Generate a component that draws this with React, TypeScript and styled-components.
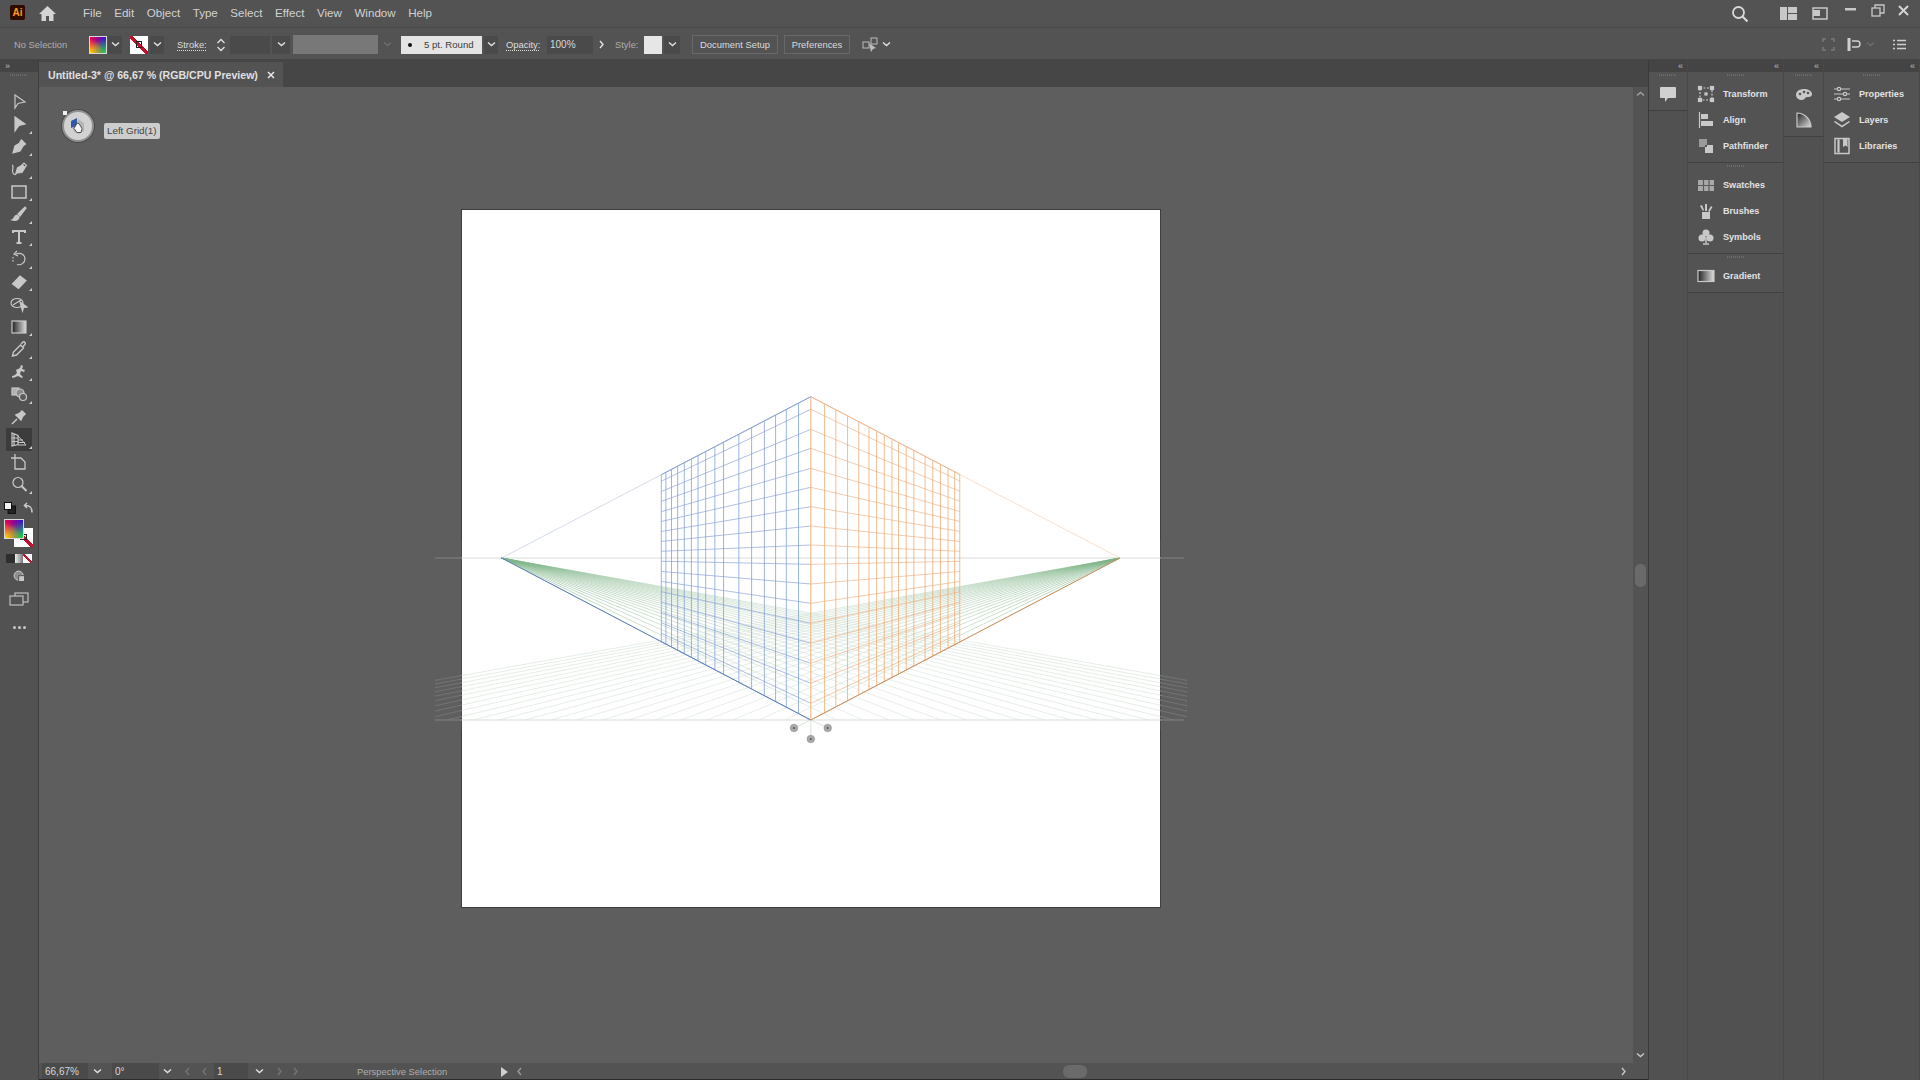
import { ReactNode } from "react";
import styled, { createGlobalStyle } from "styled-components";

const GlobalStyle = createGlobalStyle`
  html, body { margin: 0; padding: 0; background: #535353; }
  * { box-sizing: border-box; }
`;

const FONT = `"Liberation Sans", Arial, sans-serif`;

/* page */
const Page = styled.div`
  width: 1920px;
  height: 1080px;
  overflow: hidden;
  display: flex;
  flex-direction: column;
  background: #535353;
  font-family: ${FONT};
  color: #d6d6d6;
`;

const MenuBar = styled.div`
  height: 28px;
  flex: none;
  display: flex;
  align-items: center;
  border-bottom: 1px solid #484848;
  background: #535353;
`;

const AiLogo = styled.div`
  width: 15px;
  height: 15px;
  margin: 0 0 2px 10px;
  border-radius: 2px;
  background: #2e0a00;
  color: #ff9a1a;
  font-size: 10px;
  font-weight: 700;
  line-height: 15px;
  text-align: center;
`;

const MenuList = styled.div`
  display: flex;
  gap: 12.5px;
  margin: 0 0 2px 26px;
  font-size: 11.6px;
  color: #d2d2d2;
`;

const MenuRight = styled.div`
  margin-left: auto;
  display: flex;
  align-items: center;
`;

const WindowButtons = styled.div`
  display: flex;
  align-items: center;
  margin-bottom: 7px;
`;

const Slot = styled.div<{ $w: number; $ml?: number; $dark?: boolean }>`
  width: ${(p) => p.$w}px;
  margin-left: ${(p) => p.$ml ?? 0}px;
  height: 18px;
  flex: none;
  display: flex;
  align-items: center;
  justify-content: center;
  background: ${(p) => (p.$dark ? "#4a4a4a" : "transparent")};
`;

const ControlBar = styled.div`
  height: 32px;
  flex: none;
  display: flex;
  align-items: center;
  padding: 2px 0 0 14px;
  font-size: 9.4px;
  border-bottom: 1px solid #454545;
`;

const Caption = styled.span<{ $w: number; $ml?: number; $link?: boolean; $dim?: boolean }>`
  width: ${(p) => p.$w}px;
  margin-left: ${(p) => p.$ml ?? 0}px;
  flex: none;
  white-space: nowrap;
  color: ${(p) => (p.$dim ? "#aeaeae" : "#dedede")};
  font-size: 9.4px;
  text-decoration: ${(p) => (p.$link ? "underline dotted" : "none")};
  text-underline-offset: 2px;
`;

const FillSwatch = styled.div<{ $w?: number }>`
  width: ${(p) => p.$w ?? 18}px;
  height: ${(p) => p.$w ?? 18}px;
  flex: none;
  border: 1px solid #d8d8d8;
  background: radial-gradient(circle at 0% 100%, #ffe000 0, transparent 62%),
    radial-gradient(circle at 100% 100%, #20e040 0, transparent 68%),
    linear-gradient(to right, #f0004a, #2a10e0);
`;

const NoneSwatch = styled.div<{ $w?: number; $ml?: number }>`
  position: relative;
  width: ${(p) => p.$w ?? 18}px;
  height: ${(p) => p.$w ?? 18}px;
  margin-left: ${(p) => p.$ml ?? 0}px;
  flex: none;
  background: linear-gradient(to top right, #fff 43%, #c4122e 43%, #c4122e 57%, #fff 57%);

  &::after {
    content: "";
    position: absolute;
    inset: 33%;
    border: 1px solid #222;
  }
`;

const GreyField = styled.div`
  width: 85px;
  height: 19px;
  margin-left: 3px;
  flex: none;
  background: #787878;
`;

const BrushField = styled.div`
  width: 81px;
  height: 18px;
  margin-left: 5px;
  flex: none;
  display: flex;
  align-items: center;
  padding-left: 7px;
  gap: 12px;
  background: #e4e4e4;
  color: #3c3c3c;
  font-size: 9.6px;
  white-space: nowrap;

  &::before {
    content: "";
    width: 4px;
    height: 4px;
    border-radius: 50%;
    background: #111;
  }
`;

const ValueField = styled.div<{ $w: number; $ml?: number }>`
  width: ${(p) => p.$w}px;
  margin-left: ${(p) => p.$ml ?? 0}px;
  height: 18px;
  flex: none;
  padding-left: 3px;
  line-height: 18px;
  background: #4a4a4a;
  color: #d8d8d8;
  font-size: 10px;
`;

const StyleSwatch = styled.div`
  width: 18px;
  height: 18px;
  margin-left: 5px;
  flex: none;
  background: #e6e6e6;
`;

const BarButton = styled.div<{ $w: number; $ml: number }>`
  width: ${(p) => p.$w}px;
  height: 19px;
  margin-left: ${(p) => p.$ml}px;
  flex: none;
  border: 1px solid #686868;
  line-height: 17px;
  text-align: center;
  font-size: 9.4px;
  color: #dcdcdc;
`;

const BarRight = styled.div`
  margin-left: auto;
  display: flex;
  align-items: center;
`;

/* main work area */
const Main = styled.div`
  flex: 1;
  min-height: 0;
  display: flex;
`;

const ToolPanel = styled.div`
  width: 39px;
  flex: none;
  display: flex;
  flex-direction: column;
  align-items: center;
  border-right: 1px solid #3f3f3f;
  background: #525252;
`;

const StripHead = styled.div<{ $align?: string }>`
  width: 100%;
  height: 12px;
  flex: none;
  display: flex;
  align-items: center;
  justify-content: ${(p) => p.$align ?? "flex-end"};
  padding: 0 5px;
  background: #444;
  color: #bdbdbd;
  font-size: 9px;
  line-height: 12px;
  letter-spacing: -1px;
`;

const Grip = styled.div<{ $w?: number }>`
  width: ${(p) => p.$w ?? 18}px;
  height: 2px;
  margin: 2px auto 0;
  flex: none;
  background: repeating-linear-gradient(to right, #6a6a6a 0 1px, transparent 1px 2px);
`;

const ToolList = styled.div`
  display: flex;
  flex-direction: column;
  margin-top: 14.6px;
`;

const Tool = styled.div<{ $active?: boolean; $more?: boolean }>`
  position: relative;
  width: 26px;
  height: 22.5px;
  display: flex;
  align-items: center;
  justify-content: center;
  background: ${(p) => (p.$active ? "#3c3c3c" : "transparent")};

  &::after {
    content: "";
    display: ${(p) => (p.$more ? "block" : "none")};
    position: absolute;
    right: 0;
    bottom: 2px;
    border-style: solid;
    border-width: 0 0 3px 3px;
    border-color: transparent transparent #cfcfcf transparent;
  }
`;

const MiniRow = styled.div<{ $mt: number; $gap?: number }>`
  width: 30px;
  margin-top: ${(p) => p.$mt}px;
  flex: none;
  display: flex;
  align-items: center;
  justify-content: center;
  gap: ${(p) => p.$gap ?? 0}px;
`;

const SwatchStack = styled.div`
  position: relative;
  width: 30px;
  height: 30px;
  margin-top: 5px;
  flex: none;

  & > :first-child {
    position: absolute;
    left: 10px;
    top: 9px;
  }

  & > :last-child {
    position: absolute;
    left: 0;
    top: 0;
  }
`;

const ModeChip = styled.div<{ $bg: string }>`
  width: 8.5px;
  height: 9px;
  flex: none;
  background: ${(p) => p.$bg};
`;

const DocArea = styled.div`
  flex: 1;
  min-width: 0;
  display: flex;
  flex-direction: column;
`;

const TabBar = styled.div`
  height: 27px;
  flex: none;
  display: flex;
  align-items: flex-end;
  background: #464646;
`;

const Tab = styled.div`
  width: 244px;
  height: 25px;
  display: flex;
  align-items: center;
  justify-content: space-between;
  padding: 0 8px 0 9px;
  background: #535353;
  color: #e0e0e0;
  font-size: 10.6px;
  font-weight: 700;
  white-space: nowrap;
`;

const CanvasRow = styled.div`
  flex: 1;
  min-height: 0;
  display: flex;
`;

const Canvas = styled.div`
  position: relative;
  flex: 1;
  padding: 123px 0 0 423px;
  background: #5e5e5e;
`;

const Artboard = styled.div`
  position: relative;
  width: 698px;
  height: 697px;
  background: #fff;
  box-shadow: 0 0 0 1px #3e3e3e;
`;

const GridSvg = styled.svg`
  position: absolute;
  left: -27px;
  top: 180px;
  width: 760px;
  height: 360px;
  overflow: visible;
`;

const Widget = styled.div`
  position: absolute;
  left: 23px;
  top: 23px;
  width: 32px;
  height: 32px;
  display: flex;
  align-items: center;
  justify-content: center;
  border-radius: 50%;
  border: 2px solid #8f8f8f;
  background: #d2d2d2;
  box-shadow: 0 0 0 1px #4a4a4a;

  &::before {
    content: "";
    position: absolute;
    left: -1px;
    top: -1px;
    width: 4px;
    height: 4px;
    background: #f0f0f0;
  }
`;

const Tip = styled.div`
  position: absolute;
  left: 65px;
  top: 36px;
  height: 16px;
  padding: 0 3px;
  border-radius: 2px;
  background: #cdcdcd;
  color: #444;
  font-size: 9.8px;
  line-height: 16px;
  white-space: nowrap;
`;

const VScroll = styled.div`
  width: 15px;
  flex: none;
  display: flex;
  flex-direction: column;
  align-items: center;
  justify-content: space-between;
  padding: 3px 0;
  background: #535353;
`;

const ScrollThumb = styled.div`
  width: 11px;
  height: 23px;
  margin-top: 1px;
  border-radius: 5px;
  background: #6a6a6a;
`;

const StatusBar = styled.div`
  height: 15px;
  margin-top: 1px;
  flex: none;
  display: flex;
  align-items: center;
  padding-left: 3px;
  background: #535353;
  font-size: 10px;
`;

const StatusThumb = styled.div`
  width: 24px;
  height: 13px;
  margin-left: 538px;
  flex: none;
  border-radius: 6px;
  background: #6a6a6a;
`;

const BottomEdge = styled.div`
  height: 1px;
  flex: none;
  background: #2c2c2c;
`;

/* right dock */
const Dock = styled.div`
  width: 272px;
  flex: none;
  display: flex;
  border-left: 1px solid #3a3a3a;
`;

const DockColumn = styled.div<{ $w: number }>`
  width: ${(p) => p.$w}px;
  flex: none;
  display: flex;
  flex-direction: column;
  border-right: 1px solid #484848;
  background: #515151;
`;

const DockGroup = styled.div`
  display: flex;
  flex-direction: column;
  padding-bottom: 3px;
  border-bottom: 1px solid #414141;
  background: #535353;
`;

const DockItems = styled.div`
  display: flex;
  flex-direction: column;
  margin-top: 5px;
`;

const DockItem = styled.div<{ $center?: boolean }>`
  height: 26px;
  display: flex;
  align-items: center;
  justify-content: ${(p) => (p.$center ? "center" : "flex-start")};
  gap: 8px;
  padding-left: ${(p) => (p.$center ? 0 : "9px")};
  color: #e2e2e2;
  font-size: 9.1px;
  font-weight: 700;
`;

const Icon = ({ size = 18, children }: { size?: number; children: ReactNode }) => (
  <svg width={size} height={size} viewBox="0 0 18 18" fill="none" stroke="#c8c8c8" strokeWidth="1.2">
    {children}
  </svg>
);

const Chevron = ({ color = "#e2e2e2", dir = "down" }: { color?: string; dir?: "down" | "right" | "left" | "up" }) => {
  const d = { down: "M1 2.5l3.5 3 3.5-3", up: "M1 5.5l3.5-3 3.5 3", right: "M3 1l3 3.5-3 3.5", left: "M6 1L3 4.5l3 3.5" }[dir];
  return (
    <svg width="9" height="9" viewBox="0 0 9 9" fill="none" stroke={color} strokeWidth="1.4">
      <path d={d} />
    </svg>
  );
};

const tools: { key: string; more?: boolean; active?: boolean; icon: ReactNode }[] = [
  { key: "select", icon: <path d="M5 2l10 7-5 1-2 .5L5 15z" /> },
  { key: "direct", more: true, icon: <path d="M5 2l10 7-6 1.5L5 16z" fill="#c8c8c8" /> },
  { key: "pen", more: true, icon: <path d="M3 15l2-7 5-3 3 3-3 5zM9.5 4.5l2-2.5 4 4-2.5 2" fill="#c8c8c8" /> },
  { key: "curve", more: true, icon: <><path d="M6 13l1.5-5 5-3 2.5 2.5-3 5z" fill="#c8c8c8" /><path d="M12 5l2-2 2.5 2.5-2 2M2 5c3 1-1 5 1 8s3 1 3.5 0" /></> },
  { key: "rect", more: true, icon: <rect x="2" y="3" width="14" height="12" strokeWidth="1.5" fill="#5b5b5b" /> },
  { key: "brush", more: true, icon: <><path d="M8 9l7-7 1 1-6 8z" fill="#c8c8c8" /><path d="M7 10c-3 0-2 4-5 5 4 1 7 0 7-3z" fill="#c8c8c8" /></> },
  { key: "type", more: true, icon: <path d="M3 5V3h12v2M9 3v12M6.5 15h5" strokeWidth="2" /> },
  { key: "rotate", more: true, icon: <><path d="M6 4c5-2 9 1 9 5s-4 6.5-8 5.5" /><path d="M7 1L4 4l4 2" /><path d="M3 7v5" strokeDasharray="1.5 1.5" /></> },
  { key: "eraser", more: true, icon: <path d="M2.5 11L10 3l6 4.5-7.5 8z" fill="#c8c8c8" /> },
  { key: "shape", icon: <><ellipse cx="7" cy="8" rx="6" ry="4.5" /><path d="M3 10l8-5" /><path d="M10 7l7 5-3.5.5-1 3.5z" fill="#c8c8c8" /></> },
  {
    key: "gradient",
    more: true,
    icon: (
      <>
        <defs>
          <linearGradient id="toolGrad">
            <stop offset="0" stopColor="#222" />
            <stop offset="1" stopColor="#ddd" />
          </linearGradient>
        </defs>
        <rect x="2" y="3" width="14" height="12" fill="url(#toolGrad)" />
      </>
    ),
  },
  { key: "dropper", more: true, icon: <path d="M2.5 16l1-4 7-7 3 3-7 7zM11 4l2-2c1-1 3 1 2 2.500l-2 2" strokeWidth="1.4" /> },
  { key: "blend", more: true, icon: <path d="M2 13c2 0 3-1 5-3l-1-3 4-2 1-3 2 1-1 3 3 1-1 2-3-1-1 3 3 3-1 1-4-2c-2 1-4 2-6 1.500z" fill="#c8c8c8" stroke="none" /> },
  { key: "symbol", more: true, icon: <><rect x="2" y="3" width="7" height="7" fill="#b0b0b0" /><circle cx="10" cy="8" r="4" fill="#8a8a8a" /><circle cx="13" cy="12" r="3.500" fill="#5b5b5b" /></> },
  { key: "pin", icon: <path d="M2 16l5-5M6 7l5 5 1.500-3.500L15 6l-3-3-2.500 2.500z" fill="#c8c8c8" strokeWidth="1.5" /> },
  { key: "perspective", active: true, more: true, icon: <><path d="M2 3l6 2.500v9L2 16zM4 4v11M2 8h6M2 11.500h6" /><path d="M8 6l8 9H8M8 10h5M8 12.500h7" strokeWidth="1" /></> },
  { key: "artboard", icon: <path d="M5 1v4H1M5 5h6l4 4v7H5z" strokeWidth="1.300" /> },
  { key: "zoom", more: true, icon: <><circle cx="8" cy="7.500" r="5" /><path d="M11.500 11l5 5" strokeWidth="2" /></> },
];

const dockLeft = [
  [
    { label: "Transform", icon: <><rect x="3" y="3" width="12" height="12" strokeDasharray="2 1.500" /><rect x="1.500" y="1.500" width="3" height="3" fill="#c8c8c8" /><rect x="13.500" y="1.500" width="3" height="3" fill="#c8c8c8" /><rect x="1.500" y="13.500" width="3" height="3" fill="#c8c8c8" /><rect x="13.500" y="13.500" width="3" height="3" fill="#c8c8c8" /><rect x="8" y="8" width="2" height="2" fill="#c8c8c8" /></> },
    { label: "Align", icon: <><path d="M2.500 1v16" /><rect x="4" y="3" width="7" height="5" fill="#c8c8c8" stroke="none" /><rect x="4" y="10" width="12" height="5" fill="#c8c8c8" stroke="none" /></> },
    { label: "Pathfinder", icon: <><rect x="2" y="2" width="8" height="8" fill="#9a9a9a" stroke="none" /><rect x="8" y="8" width="8" height="8" fill="#c8c8c8" stroke="none" /><rect x="8" y="8" width="2" height="2" fill="#535353" stroke="none" /></> },
  ],
  [
    { label: "Swatches", icon: <><rect x="1" y="4" width="16" height="11" fill="#a8a8a8" stroke="none" /><path d="M1 9.500h16M6.500 4v11M12 4v11" stroke="#5b5b5b" /></> },
    { label: "Brushes", icon: <path d="M5 10h8v7H5zM6 9L3 4l2-1 2 5zM8 9V2h2v7zM11 9l3-5 1.500 1-3 5z" fill="#c8c8c8" stroke="none" /> },
    { label: "Symbols", icon: <><circle cx="9" cy="5" r="3.500" fill="#c8c8c8" stroke="none" /><circle cx="5" cy="10" r="3.500" fill="#c8c8c8" stroke="none" /><circle cx="13" cy="10" r="3.500" fill="#c8c8c8" stroke="none" /><path d="M9 9v6M6 16h6" strokeWidth="1.500" /></> },
  ],
  [
    {
      label: "Gradient",
      icon: (
        <>
          <defs>
            <linearGradient id="dockGrad">
              <stop offset="0" stopColor="#222" />
              <stop offset="1" stopColor="#e0e0e0" />
            </linearGradient>
          </defs>
          <rect x="1" y="3.500" width="16" height="11" fill="url(#dockGrad)" stroke="#c8c8c8" />
        </>
      ),
    },
  ],
];

const dockRight = [
  { label: "Properties", icon: <><path d="M1 4h16M1 9h16M1 14h16" strokeWidth="1" /><circle cx="6" cy="4" r="1.700" fill="#535353" /><circle cx="12" cy="9" r="1.700" fill="#535353" /><circle cx="6" cy="14" r="1.700" fill="#535353" /></> },
  { label: "Layers", icon: <><path d="M9 1l8 5-8 5-8-5z" fill="#c8c8c8" stroke="none" /><path d="M2 10l7 4.500 7-4.500 1 1-8 5.500L1 11z" fill="#c8c8c8" stroke="none" /></> },
  { label: "Libraries", icon: <><rect x="2" y="1.500" width="14" height="15" strokeWidth="1.500" /><rect x="5" y="3" width="1" height="12" fill="#c8c8c8" /><path d="M10 2h4.500v8l-2.200-1.500L10 10z" fill="#c8c8c8" stroke="none" /></> },
];

/* perspective grid, all numbers in page pixels */
const VP_L = 501.6;
const VP_R = 1120;
const HORIZON = 558;
const CX = 810.8;
const GROUND = 720;
const SPAN = 309.2;

const rowsAtCorner = [50, 88, 148, 205, 265, 322, 380, 438, 495, 553, 612, 670, 730, 790, 850, 910, 970, 1020].map(
  (v) => 380 + v / 3
);
const leftCols = [24, 48, 69, 91, 116, 141, 171, 188, 206, 221, 234, 248, 261, 273, 284, 293].map((u) => u / 1.96);
const rightCols = [27, 49, 72, 94, 114, 129, 144, 159, 172, 187, 202, 224, 239, 254, 269, 282, 292].map((u) => u / 1.96);
const edgeLeft = 149.5;
const edgeRight = 149;

const wallY = (cornerY: number, dx: number) => HORIZON + (cornerY - HORIZON) * (1 - dx / SPAN);

const fanRays = Array.from({ length: 24 }, (_, i) => CX - i * 26).map((groundX) => {
  const dist = VP_R - groundX;
  const slope = (GROUND - HORIZON) / dist;
  const clipped = groundX < 435;
  const reach = clipped ? VP_R - 435 : dist;
  return { reach, drop: clipped ? slope * reach : GROUND - HORIZON };
});

const FanStops = () => (
  <>
    <stop offset="0" stopColor="#7ab283" />
    <stop offset="0.25" stopColor="#b5d2b9" />
    <stop offset="0.5" stopColor="#d8e5d9" />
    <stop offset="1" stopColor="#d3dfd3" />
  </>
);

const PerspectiveGrid = () => (
  <GridSvg viewBox="435 390 760 360" fill="none">
    <defs>
      <linearGradient id="fanL" gradientUnits="userSpaceOnUse" x1={VP_L} y1="0" x2="1184" y2="0">
        <FanStops />
      </linearGradient>
      <linearGradient id="fanR" gradientUnits="userSpaceOnUse" x1={VP_R} y1="0" x2="435" y2="0">
        <FanStops />
      </linearGradient>
    </defs>
    <path d={`M435 ${HORIZON}H1184M435 ${GROUND}H1184`} stroke="#d9dcd9" strokeWidth="1" />
    <g strokeWidth="0.6">
      {fanRays.map((r, i) => (
        <g key={i}>
          <line x1={VP_L} y1={HORIZON} x2={VP_L + r.reach} y2={HORIZON + r.drop} stroke="url(#fanL)" />
          <line x1={VP_R} y1={HORIZON} x2={VP_R - r.reach} y2={HORIZON + r.drop} stroke="url(#fanR)" />
        </g>
      ))}
    </g>
    {rowsAtCorner.map((y) => (
      <g key={y} strokeWidth="0.7">
        <line x1={CX} y1={y} x2={CX - edgeLeft} y2={wallY(y, edgeLeft)} stroke="#8ea3d8" />
        <line x1={CX} y1={y} x2={CX + edgeRight} y2={wallY(y, edgeRight)} stroke="#eeb48a" />
      </g>
    ))}
    {leftCols.map((dx) => (
      <line key={dx} x1={CX - dx} y1={wallY(396.7, dx)} x2={CX - dx} y2={wallY(GROUND, dx)} stroke="#7fa2dc" strokeWidth="0.8" />
    ))}
    {rightCols.map((dx) => (
      <line key={dx} x1={CX + dx} y1={wallY(396.7, dx)} x2={CX + dx} y2={wallY(GROUND, dx)} stroke="#efac74" strokeWidth="0.8" />
    ))}
    <line x1={CX} y1="396.7" x2={CX} y2={GROUND} stroke="#eeb07c" strokeWidth="1" />
    <path d={`M${VP_L} ${HORIZON}L${CX} 396.7`} stroke="#c9d0e2" strokeWidth="0.8" />
    <path d={`M${CX - edgeLeft} ${wallY(396.7, edgeLeft)}L${CX} 396.7`} stroke="#7f9bd4" strokeWidth="0.8" />
    <path d={`M${VP_R} ${HORIZON}L${CX} 396.7`} stroke="#f2d8c4" strokeWidth="0.8" />
    <path d={`M${CX + edgeRight} ${wallY(396.7, edgeRight)}L${CX} 396.7`} stroke="#eeb48a" strokeWidth="0.8" />
    <path d={`M${VP_L} ${HORIZON}L${CX} ${GROUND}`} stroke="#5d7fbd" strokeWidth="1" />
    <path d={`M${VP_R} ${HORIZON}L${CX} ${GROUND}`} stroke="#cf8f5f" strokeWidth="1" />
    {/* the part outside the artboard sits on the dark canvas */}
    <rect x="435" y="540" width="26.500" height="190" fill="#5e5e5e" opacity="0.72" />
    <rect x="1160.500" y="540" width="26" height="190" fill="#5e5e5e" opacity="0.72" />
    <path d="M794 728L810.800 720L827.700 728M810.800 720V739" stroke="#c8d8c8" strokeWidth="0.7" />
    {[[794, 728], [827.7, 728], [810.8, 739]].map(([x, y]) => (
      <g key={x}>
        <circle cx={x} cy={y} r="3.800" fill="#a8a8a8" stroke="#8a8a8a" strokeWidth="0.5" />
        <circle cx={x} cy={y} r="1" fill="#555" />
      </g>
    ))}
  </GridSvg>
);

const App = () => (
  <Page>
    <GlobalStyle />
    <MenuBar>
      <AiLogo>Ai</AiLogo>
      <Slot $w={20} $ml={12}>
        <svg width="19" height="17" viewBox="0 0 19 17" fill="#d4d4d4">
          <path d="M9.500 1L1 9h2.500v7h4.500v-5h3v5h4.500V9H18z" />
        </svg>
      </Slot>
      <MenuList>
        {["File", "Edit", "Object", "Type", "Select", "Effect", "View", "Window", "Help"].map((m) => (
          <span key={m}>{m}</span>
        ))}
      </MenuList>
      <MenuRight>
        <Slot $w={20}>
          <svg width="18" height="18" viewBox="0 0 18 18" fill="none" stroke="#d8d8d8" strokeWidth="1.800">
            <circle cx="7.500" cy="7.500" r="5.500" />
            <path d="M11.500 11.500l5 5" strokeWidth="2.200" />
          </svg>
        </Slot>
        <Slot $w={18} $ml={29}>
          <svg width="17" height="13" viewBox="0 0 17 13" fill="#c8c8c8">
            <path d="M0 0h7v13H0zM8 0h9v6H8zM8 7h9v6H8z" />
          </svg>
        </Slot>
        <Slot $w={16} $ml={15}>
          <svg width="16" height="13" viewBox="0 0 16 13" fill="none" stroke="#c8c8c8" strokeWidth="1.500">
            <rect x="1" y="1" width="14" height="11" />
            <path d="M1 3h7v6H1z" fill="#c8c8c8" stroke="none" />
          </svg>
        </Slot>
        <WindowButtons>
          <Slot $w={12} $ml={16}>
            <svg width="11" height="4" viewBox="0 0 11 4" fill="#c8c8c8">
              <rect width="11" height="2.500" />
            </svg>
          </Slot>
          <Slot $w={14} $ml={15}>
            <svg width="14" height="13" viewBox="0 0 14 13" fill="none" stroke="#c8c8c8" strokeWidth="1.300">
              <rect x="1" y="4" width="8" height="8" />
              <path d="M4 4V1h9v8h-4" />
            </svg>
          </Slot>
          <Slot $w={12} $ml={12}>
            <svg width="11" height="11" viewBox="0 0 11 11" stroke="#d4d4d4" strokeWidth="2">
              <path d="M1 1l9 9M10 1l-9 9" />
            </svg>
          </Slot>
          <Slot $w={11} />
        </WindowButtons>
      </MenuRight>
    </MenuBar>

    <ControlBar>
      <Caption $w={75} $dim>No Selection</Caption>
      <FillSwatch />
      <Slot $w={14} $ml={1} $dark><Chevron /></Slot>
      <NoneSwatch $ml={8} />
      <Slot $w={14} $ml={2} $dark><Chevron /></Slot>
      <Caption $w={30} $ml={13} $link>Stroke:</Caption>
      <Slot $w={14} $ml={7}>
        <svg width="10" height="16" viewBox="0 0 10 16" fill="none" stroke="#e2e2e2" strokeWidth="1.300">
          <path d="M1.500 6L5 2.500 8.500 6M1.500 10L5 13.500 8.500 10" />
        </svg>
      </Slot>
      <ValueField $w={40} $ml={2} />
      <Slot $w={18} $ml={2} $dark><Chevron /></Slot>
      <GreyField />
      <Slot $w={18} $ml={0}><Chevron color="#6e6e6e" /></Slot>
      <BrushField>5 pt. Round</BrushField>
      <Slot $w={14} $ml={2} $dark><Chevron /></Slot>
      <Caption $w={36} $ml={8} $link>Opacity:</Caption>
      <ValueField $w={46} $ml={5}>100%</ValueField>
      <Slot $w={14} $ml={1}><Chevron dir="right" /></Slot>
      <Caption $w={24} $ml={7} $dim>Style:</Caption>
      <StyleSwatch />
      <Slot $w={16} $ml={2} $dark><Chevron /></Slot>
      <BarButton $w={86} $ml={12}>Document Setup</BarButton>
      <BarButton $w={66} $ml={6}>Preferences</BarButton>
      <Slot $w={18} $ml={11}>
        <svg width="17" height="16" viewBox="0 0 17 16" fill="none" stroke="#bdbdbd" strokeWidth="1">
          <rect x="1" y="5" width="6" height="6" />
          <rect x="9" y="1" width="6" height="6" />
          <path d="M7 6l7 5-3 1-2 3z" fill="#bdbdbd" stroke="none" />
        </svg>
      </Slot>
      <Slot $w={10} $ml={2}><Chevron /></Slot>
      <BarRight>
        <Slot $w={14}>
          <svg width="13" height="13" viewBox="0 0 13 13" fill="#6f6f6f">
            <path d="M0 0h4v2H2v2H0zM9 0h4v4h-2V2H9zM0 9h2v2h2v2H0zM11 9h2v4H9v-2h2z" />
          </svg>
        </Slot>
        <Slot $w={16} $ml={11}>
          <svg width="15" height="15" viewBox="0 0 15 15" fill="none" stroke="#cfcfcf" strokeWidth="1.400">
            <path d="M2 1v13" strokeWidth="3" />
            <path d="M5 4h5c4 0 4 6 0 6H5" />
          </svg>
        </Slot>
        <Slot $w={10} $ml={3}><Chevron color="#6e6e6e" /></Slot>
        <Slot $w={14} $ml={17}>
          <svg width="13" height="11" viewBox="0 0 13 11" fill="none" stroke="#cfcfcf" strokeWidth="1.400">
            <path d="M0 1.500h2M4 1.500h9M0 5.500h2M4 5.500h9M0 9.500h2M4 9.500h9" />
          </svg>
        </Slot>
        <Slot $w={14} />
      </BarRight>
    </ControlBar>

    <Main>
      <ToolPanel>
        <StripHead $align="flex-start">››</StripHead>
        <Grip />
        <ToolList>
          {tools.map((t) => (
            <Tool key={t.key} $more={t.more} $active={t.active}>
              <Icon>{t.icon}</Icon>
            </Tool>
          ))}
        </ToolList>
        <MiniRow $mt={6} $gap={7}>
          <svg width="12" height="12" viewBox="0 0 12 12" stroke="#111" strokeWidth="1">
            <rect x="4" y="4" width="7.500" height="7.500" fill="#222" />
            <rect x="0.500" y="0.500" width="7" height="7" fill="#f2f2f2" />
          </svg>
          <svg width="11" height="12" viewBox="0 0 11 12" fill="none" stroke="#c8c8c8" strokeWidth="1.600">
            <path d="M4 1L1.500 3.500 4 6M2 3.500c4 0 7 1 7 7" />
          </svg>
        </MiniRow>
        <SwatchStack>
          <NoneSwatch $w={19} />
          <FillSwatch $w={20} />
        </SwatchStack>
        <MiniRow $mt={5}>
          <ModeChip $bg="#2e2e2e" />
          <ModeChip $bg="linear-gradient(to right, #eee, #777)" />
          <ModeChip $bg="linear-gradient(to top right, #fff 40%, #c4122e 40%, #c4122e 60%, #fff 60%)" />
        </MiniRow>
        <MiniRow $mt={6}>
          <Icon size={15}>
            <circle cx="8" cy="8" r="5.500" fill="#8e8e8e" />
            <rect x="8" y="8" width="7" height="7" fill="#c8c8c8" stroke="#535353" />
          </Icon>
        </MiniRow>
        <MiniRow $mt={8}>
          <svg width="20" height="14" viewBox="0 0 20 14" fill="none" stroke="#c0c0c0" strokeWidth="1.200">
            <rect x="6" y="1" width="13" height="9" />
            <rect x="1" y="4" width="13" height="9" fill="#525252" />
          </svg>
        </MiniRow>
        <MiniRow $mt={20} $gap={2}>
          {[0, 1, 2].map((i) => (
            <svg key={i} width="3" height="3" viewBox="0 0 3 3">
              <circle cx="1.500" cy="1.500" r="1.500" fill="#c8c8c8" />
            </svg>
          ))}
        </MiniRow>
      </ToolPanel>

      <DocArea>
        <TabBar>
          <Tab>
            <span>Untitled-3* @ 66,67 % (RGB/CPU Preview)</span>
            <svg width="8" height="8" viewBox="0 0 8 8" stroke="#e8e8e8" strokeWidth="1.500">
              <path d="M1 1l6 6M7 1L1 7" />
            </svg>
          </Tab>
        </TabBar>
        <CanvasRow>
          <Canvas>
            <Widget>
              <svg width="20" height="20" viewBox="0 0 20 20">
                <path d="M3 5l6-3v8l-6 2z" fill="#2f5aa8" />
                <path d="M10 3l6 4v8l-5 3-5-2-2-5 6-1z" fill="#9a9a9a" opacity="0.5" />
                <path d="M8 9l1-2 2 .5 3 5-1 4-4 0-3-4z" fill="#f4f4f4" stroke="#333" strokeWidth="0.800" />
              </svg>
            </Widget>
            <Tip>Left Grid(1)</Tip>
            <Artboard>
              <PerspectiveGrid />
            </Artboard>
          </Canvas>
          <VScroll>
            <Chevron color="#a0a0a0" dir="up" />
            <ScrollThumb />
            <Chevron color="#c8c8c8" />
          </VScroll>
        </CanvasRow>
        <StatusBar>
          <ValueField $w={46}>66,67%</ValueField>
          <Slot $w={16} $ml={1}><Chevron /></Slot>
          <ValueField $w={47} $ml={7}>0°</ValueField>
          <Slot $w={16} $ml={0}><Chevron /></Slot>
          <Slot $w={16} $ml={4}><Chevron color="#757575" dir="left" /></Slot>
          <Slot $w={16} $ml={1}><Chevron color="#757575" dir="left" /></Slot>
          <ValueField $w={34} $ml={2}>1</ValueField>
          <Slot $w={16} $ml={3}><Chevron /></Slot>
          <Slot $w={16} $ml={4}><Chevron color="#757575" dir="right" /></Slot>
          <Slot $w={16} $ml={0}><Chevron color="#757575" dir="right" /></Slot>
          <Caption $w={90} $ml={54} $dim>Perspective Selection</Caption>
          <Slot $w={12} $ml={51}>
            <svg width="7" height="10" viewBox="0 0 7 10" fill="#cfcfcf">
              <path d="M0 0l7 5-7 5z" />
            </svg>
          </Slot>
          <Slot $w={12} $ml={3}><Chevron color="#9a9a9a" dir="left" /></Slot>
          <StatusThumb />
          <Slot $w={12} $ml={530}><Chevron color="#c8c8c8" dir="right" /></Slot>
        </StatusBar>
        <BottomEdge />
      </DocArea>

      <Dock>
        <DockColumn $w={39}>
          <StripHead>‹‹</StripHead>
          <DockGroup>
            <Grip />
            <DockItems>
              <DockItem $center>
                <svg width="18" height="17" viewBox="0 0 18 17" fill="#d0d0d0">
                  <path d="M2 1h14a1 1 0 0 1 1 1v9a1 1 0 0 1-1 1H9l-3 4v-4H2a1 1 0 0 1-1-1V2a1 1 0 0 1 1-1z" />
                </svg>
              </DockItem>
            </DockItems>
          </DockGroup>
        </DockColumn>
        <DockColumn $w={96}>
          <StripHead>‹‹</StripHead>
          {dockLeft.map((group) => (
            <DockGroup key={group[0].label}>
              <Grip />
              <DockItems>
                {group.map((item) => (
                  <DockItem key={item.label}>
                    <Icon>{item.icon}</Icon>
                    <span>{item.label}</span>
                  </DockItem>
                ))}
              </DockItems>
            </DockGroup>
          ))}
        </DockColumn>
        <DockColumn $w={40}>
          <StripHead>‹‹</StripHead>
          <DockGroup>
            <Grip />
            <DockItems>
              <DockItem $center>
                <Icon>
                  <path d="M1 10c0-4 4-6 8-6s8 2 8 5-3 3-5 3-2 3-5 3-6-2-6-5z" fill="#c8c8c8" stroke="none" />
                  <circle cx="5" cy="9" r="1.300" fill="#535353" stroke="none" />
                  <circle cx="9" cy="7" r="1.300" fill="#535353" stroke="none" />
                  <circle cx="13" cy="8" r="1.300" fill="#535353" stroke="none" />
                </Icon>
              </DockItem>
              <DockItem $center>
                <Icon>
                  <defs>
                    <linearGradient id="appearance" x1="0" y1="0" x2="1" y2="1">
                      <stop offset="0" stopColor="#222" />
                      <stop offset="1" stopColor="#ddd" />
                    </linearGradient>
                  </defs>
                  <path d="M2 2c7 0 14 6 14 14H2z" fill="url(#appearance)" stroke="#c8c8c8" />
                </Icon>
              </DockItem>
            </DockItems>
          </DockGroup>
        </DockColumn>
        <DockColumn $w={96}>
          <StripHead>‹‹</StripHead>
          <DockGroup>
            <Grip />
            <DockItems>
              {dockRight.map((item) => (
                <DockItem key={item.label}>
                  <Icon>{item.icon}</Icon>
                  <span>{item.label}</span>
                </DockItem>
              ))}
            </DockItems>
          </DockGroup>
        </DockColumn>
      </Dock>
    </Main>
  </Page>
);

export default App;
